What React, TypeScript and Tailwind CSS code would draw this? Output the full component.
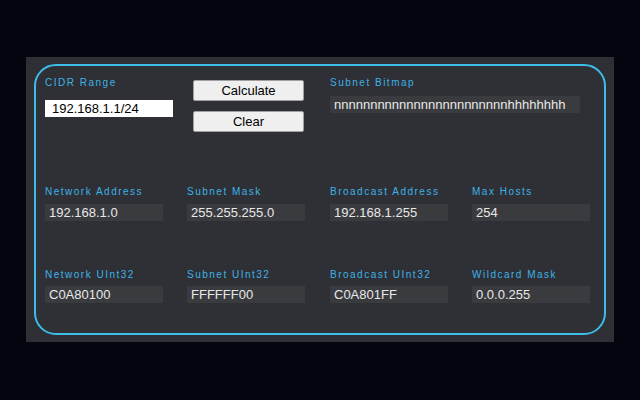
const font = { fontFamily: '"Liberation Sans", Arial, sans-serif' };

function Label({ text, className = '' }: { text: string; className?: string }) {
  return (
    <div className={`text-[10px] leading-[12px] tracking-[1.5px] text-[#3fb2e4] ${className}`}>{text}</div>
  );
}

function Field({ label, value, gap }: { label: string; value: string; gap: string }) {
  return (
    <div>
      <Label text={label} className={gap} />
      <div className="w-[118px] h-[17px] bg-[#3a3b3f] pl-[4px] text-[13px] leading-[17px] text-[#e8e8e8]">{value}</div>
    </div>
  );
}

export default function App() {
  const bitmap = 'n'.repeat(24) + 'h'.repeat(8);
  return (
    <div className="w-[640px] h-[400px] bg-[#05050f] flex items-center justify-center" style={font}>
      <div className="w-[588px] h-[285px] bg-[#2e3036] px-[8px] pt-[7px] pb-[7px] mt-[-1px]">
        <div className="h-full border-2 border-[#3dbde8] rounded-[22px] pl-[9px] pt-[11px]">
          {/* Input row */}
          <div className="grid grid-cols-[142px_143px_142px_143px]">
            <div>
              <Label text="CIDR Range" className="mb-[7px]" />
              <input
                className="w-[128px] h-[17px] bg-white text-black text-[13px] leading-[17px] pl-[7px] outline-none"
                defaultValue="192.168.1.1/24"
              />
            </div>
            <div className="pt-[3px] pl-[6px] flex flex-col gap-[10px]">
              <button className="w-[111px] h-[21px] bg-[#efefef] border border-[#a0a0a0] rounded-[2px] text-[13px] text-black leading-none">
                Calculate
              </button>
              <button className="w-[111px] h-[21px] bg-[#efefef] border border-[#a0a0a0] rounded-[2px] text-[13px] text-black leading-none">
                Clear
              </button>
            </div>
            <div className="col-span-2">
              <Label text="Subnet Bitmap" className="mb-[7px]" />
              <div className="w-[250px] h-[17px] bg-[#3a3b3f] pl-[4px] text-[13px] leading-[17px] text-[#e8e8e8]">{bitmap}</div>
            </div>
          </div>

          {/* Addresses */}
          <div className="grid grid-cols-[142px_143px_142px_143px] mt-[54px]">
            <Field label="Network Address" value="192.168.1.0" gap="mb-[6px]" />
            <Field label="Subnet Mask" value="255.255.255.0" gap="mb-[6px]" />
            <Field label="Broadcast Address" value="192.168.1.255" gap="mb-[6px]" />
            <Field label="Max Hosts" value="254" gap="mb-[6px]" />
          </div>

          {/* UInt32 values */}
          <div className="grid grid-cols-[142px_143px_142px_143px] mt-[48px]">
            <Field label="Network UInt32" value="C0A80100" gap="mb-[5px]" />
            <Field label="Subnet UInt32" value="FFFFFF00" gap="mb-[5px]" />
            <Field label="Broadcast UInt32" value="C0A801FF" gap="mb-[5px]" />
            <Field label="Wildcard Mask" value="0.0.0.255" gap="mb-[5px]" />
          </div>
        </div>
      </div>
    </div>
  );
}
